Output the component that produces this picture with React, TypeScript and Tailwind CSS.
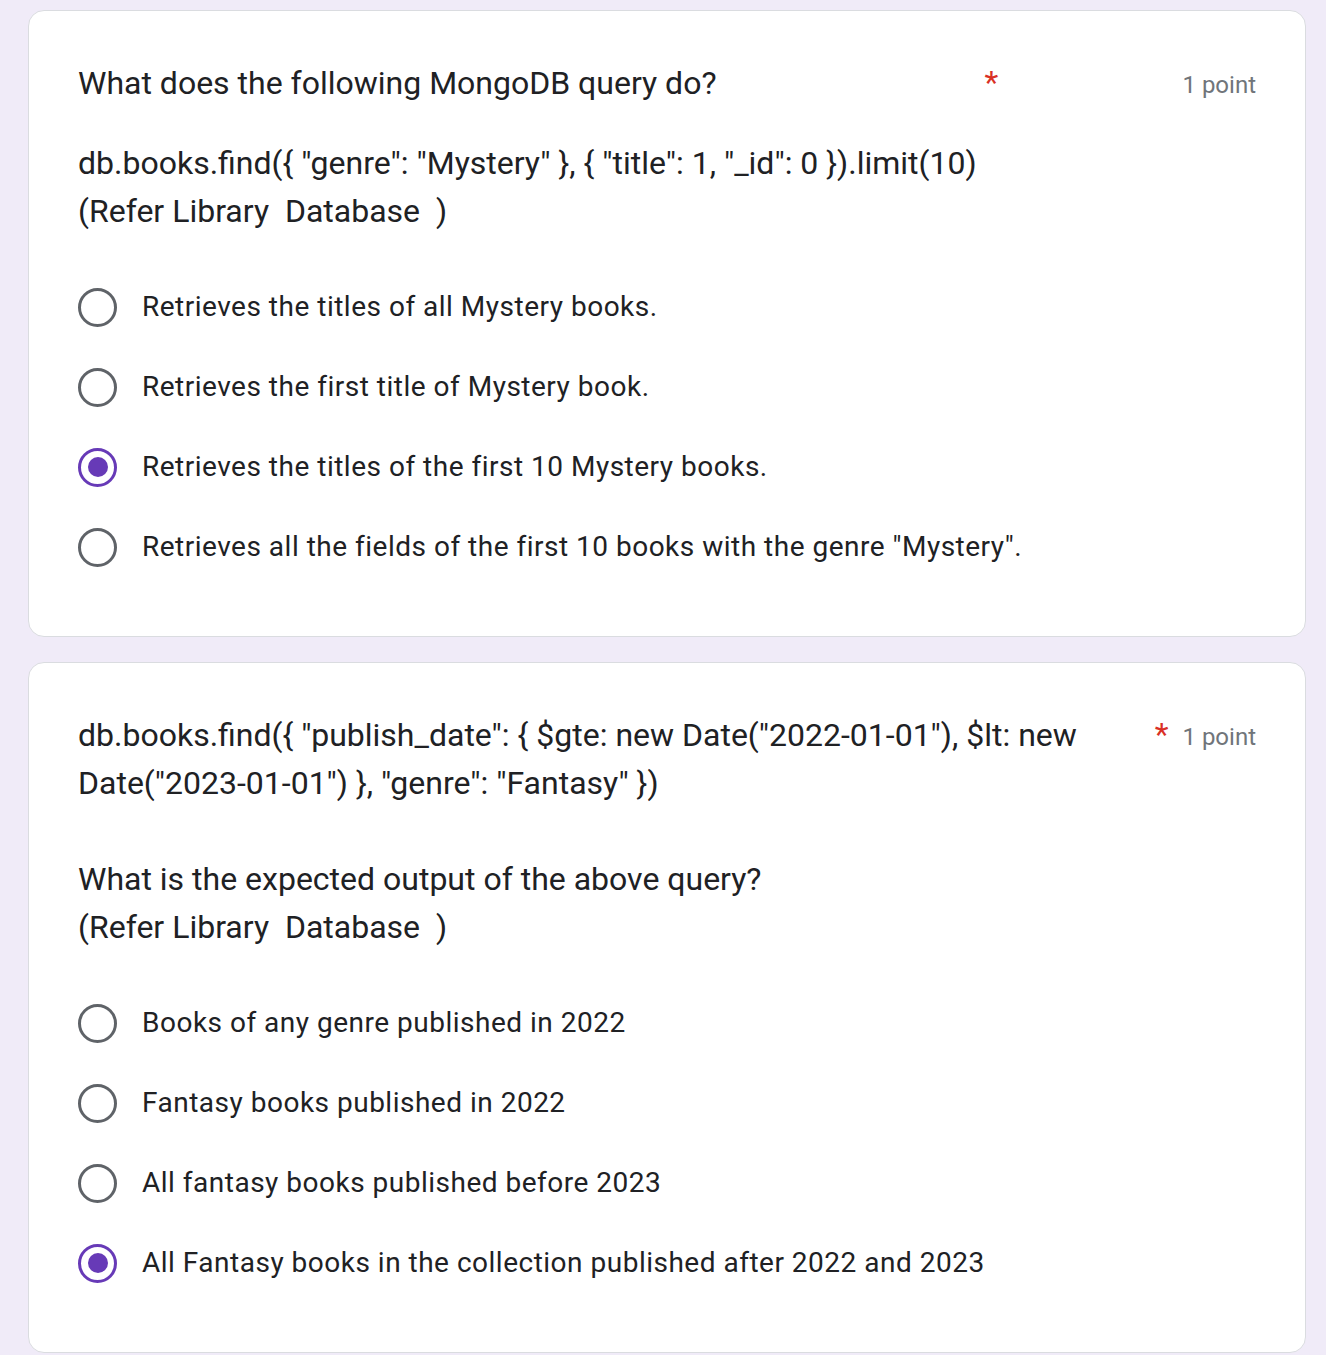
import React from "react";

type Q = {
  title: React.ReactNode;
  options: string[];
  selected: number;
};

function Radio({ checked }: { checked: boolean }) {
  return (
    <div
      className={
        "w-[39px] h-[39px] rounded-full border-[3.5px] flex items-center justify-center shrink-0 " +
        (checked ? "border-[#673ab7]" : "border-[#5f6368]")
      }
    >
      {checked && <div className="w-[20px] h-[20px] rounded-full bg-[#673ab7]" />}
    </div>
  );
}

function Card({ q }: { q: Q }) {
  return (
    <div className="bg-white rounded-[16px] border-[1.5px] border-[#dadce0] pt-[48px] pb-[49px] px-[49px]">
      <div className="flex items-start">
        <div className="shrink text-[32px] leading-[48px] text-[#202124]">{q.title}</div>
        <span className="text-[#d93025] text-[32px] leading-[46px] pl-[8px] shrink-0">*</span>
        <div className="ml-auto pl-[14px] shrink-0 text-[24px] leading-[48px] text-[#70757a] pt-[2px]">1 point</div>
      </div>
      <div className="mt-[32px] flex flex-col">
        {q.options.map((o, i) => (
          <div key={i} className="h-[80px] flex items-center">
            <Radio checked={i === q.selected} />
            <span className="ml-[25px] text-[28px] tracking-[0.5px] text-[#202124] leading-[40px]">{o}</span>
          </div>
        ))}
      </div>
    </div>
  );
}

export default function App() {
  const q1: Q = {
    title: (
      <>
        <div>What does the following MongoDB query do?</div>
        <div className="mt-[32px]">{'db.books.find({ "genre": "Mystery" }, { "title": 1, "_id": 0 }).limit(10)'}</div>
        <div className="whitespace-pre">{"(Refer Library  Database  )"}</div>
      </>
    ),
    options: [
      "Retrieves the titles of all Mystery books.",
      "Retrieves the first title of Mystery book.",
      "Retrieves the titles of the first 10 Mystery books.",
      'Retrieves all the fields of the first 10 books with the genre "Mystery".',
    ],
    selected: 2,
  };
  const q2: Q = {
    title: (
      <>
        <div>{'db.books.find({ "publish_date": { $gte: new Date("2022-01-01"), $lt: new Date("2023-01-01") }, "genre": "Fantasy" })'}</div>
        <div className="mt-[48px]">What is the expected output of the above query?</div>
        <div className="whitespace-pre">{"(Refer Library  Database  )"}</div>
      </>
    ),
    options: [
      "Books of any genre published in 2022",
      "Fantasy books published in 2022",
      "All fantasy books published before 2023",
      "All Fantasy books in the collection published after 2022 and 2023",
    ],
    selected: 3,
  };
  return (
    <div
      className="min-h-screen bg-[#f0ebf8] pl-[28px] pr-[20px] pt-[10px] pb-[10px] flex flex-col gap-[25px]"
      style={{ fontFamily: "Roboto, 'Liberation Sans', sans-serif" }}
    >
      <Card q={q1} />
      <Card q={q2} />
    </div>
  );
}
